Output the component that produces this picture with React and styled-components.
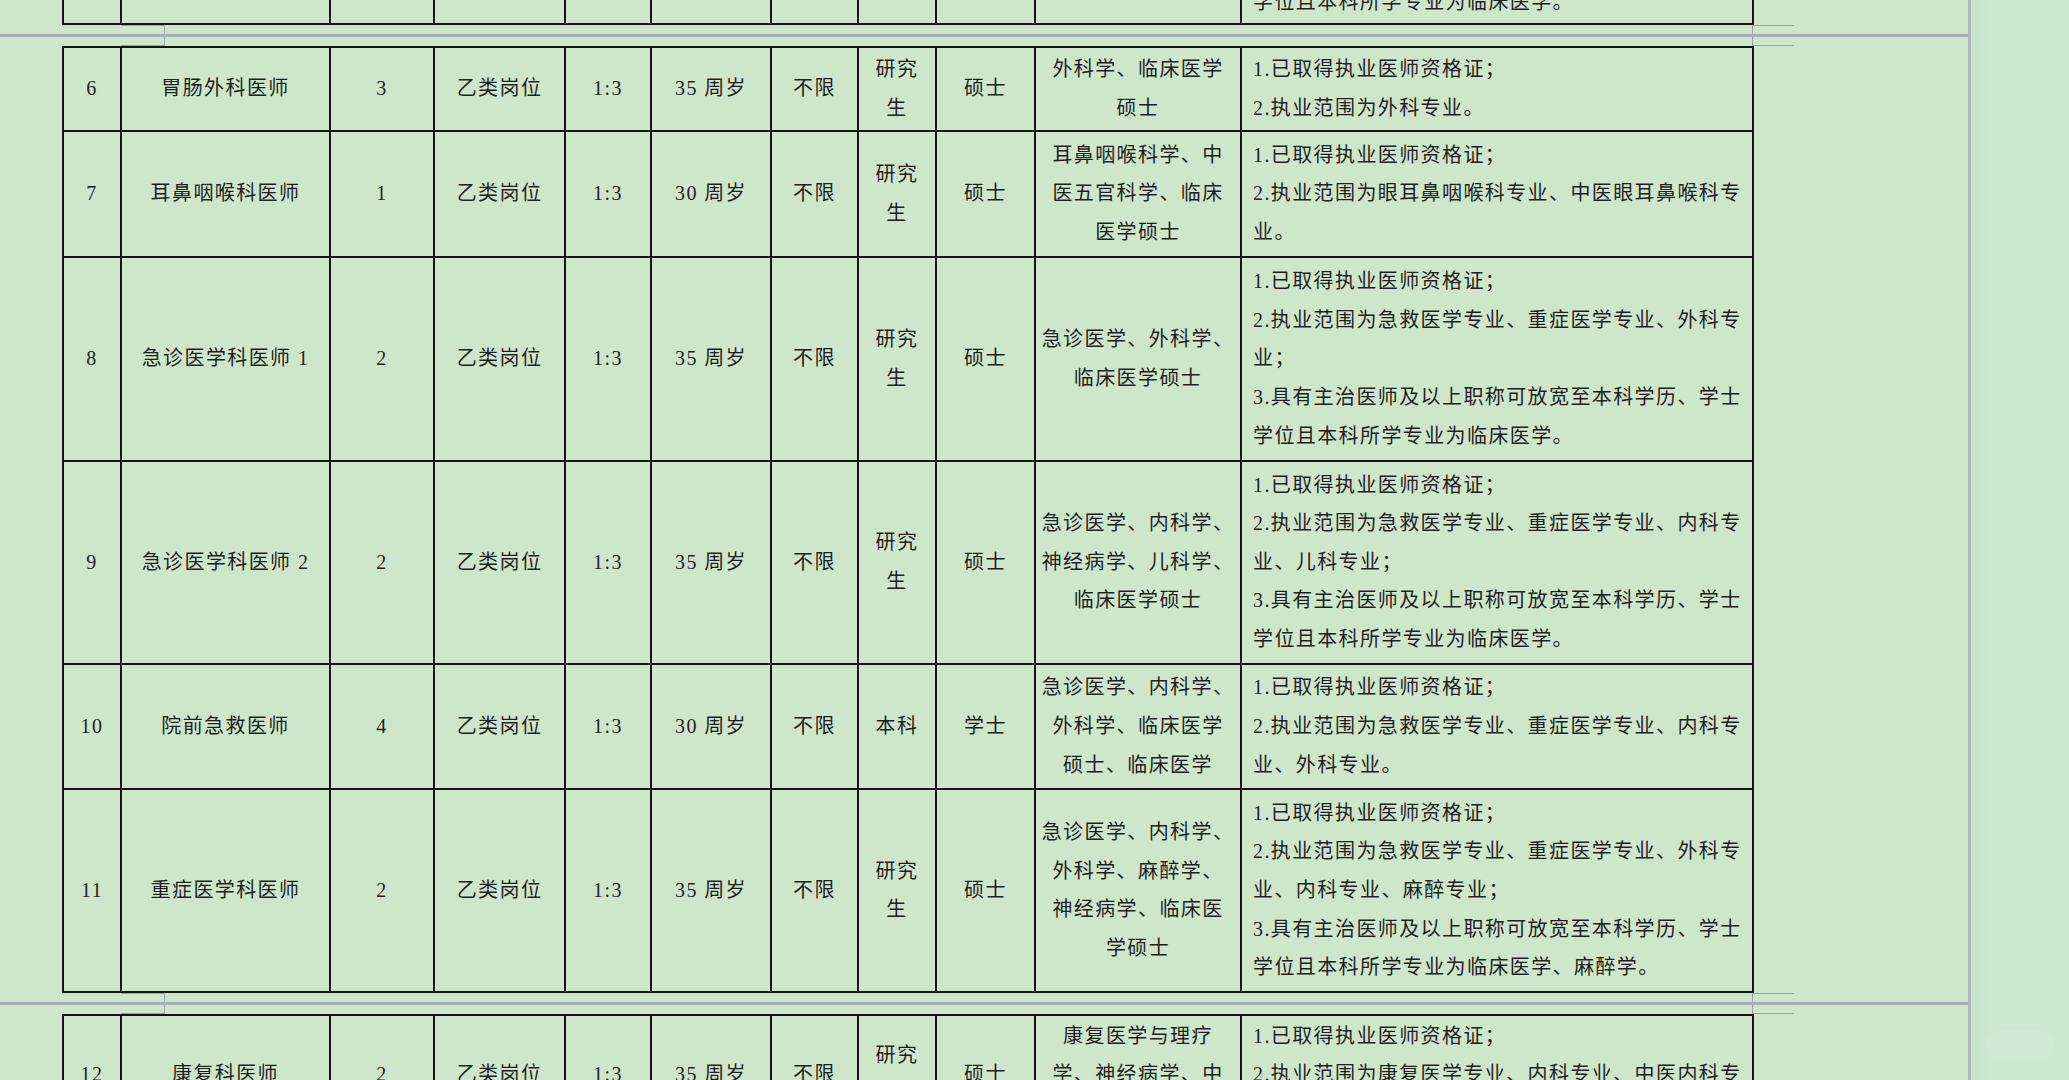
import React from "react";
import styled, { createGlobalStyle } from "styled-components";

const GlobalStyle = createGlobalStyle`
  html, body {
    margin: 0;
    padding: 0;
    background: #cee7cb;
  }
  body {
    font-family: "Liberation Serif", "Noto Sans CJK SC", serif;
    color: #1f1f1f;
  }
`;

const Screen = styled.div`
  display: flex;
  width: 2069px;
  height: 1080px;
  overflow: hidden;
  background: #cee7cb;
`;

const Doc = styled.div`
  width: 1968px;
  flex: none;
  display: flex;
  flex-direction: column;
  overflow: hidden;
`;

const Edge = styled.div`
  width: 3px;
  flex: none;
  background: #b2b6be;
`;

const Side = styled.div`
  flex: 1;
  background: linear-gradient(to right, #c7e3cc, #cde8d1 18px);
  display: flex;
  flex-direction: column;
  justify-content: flex-end;
  align-items: center;
  padding-bottom: 20px;
`;

const Watermark = styled.div`
  width: 68px;
  height: 30px;
  border-radius: 15px;
  background: rgba(255, 255, 255, 0.07);
`;

// tail of the previous page, only its bottom edge shows
const Tail = styled.div`
  height: 25px;
  flex: none;
  overflow: hidden;
  display: flex;
  flex-direction: column;
  justify-content: flex-end;
`;

const Sheet = styled.table`
  flex: none;
  margin-left: 62px;
  width: 1690px;
  table-layout: fixed;
  border-collapse: collapse;
`;

const Row = styled.tr`
  height: ${(p) => p.$h}px;
`;

const Cell = styled.td`
  border: 2px solid #151515;
  padding: 0 ${(p) => (p.$left ? "4px 0 11px" : "4px")};
  text-align: ${(p) => (p.$left ? "left" : "center")};
  vertical-align: middle;
  font-size: 20px;
  line-height: 38.6px;
  letter-spacing: 1.4px;
  white-space: nowrap;
  overflow: hidden;
`;

const Line = styled.div`
  display: block;
`;

const Break = styled.div`
  flex: none;
  display: grid;
  grid-template-columns: 121px 44px 1587px 42px 1fr;
  grid-template-rows: 9px 3px 9px;
`;

const BreakLine = styled.div`
  grid-column: 1 / -1;
  grid-row: 2;
  background: #a9adb5;
`;

const Mark = styled.div`
  grid-column: ${(p) => (p.$right ? 4 : 2)};
  grid-row: ${(p) => (p.$bottom ? 3 : 1)};
  border-color: #9ea2aa;
  border-style: solid;
  border-width: ${(p) =>
    `${p.$bottom ? 0 : 1}px ${p.$right ? 0 : 1}px ${p.$bottom ? 1 : 0}px ${
      p.$right ? 1 : 0
    }px`};
`;

const widths = [58, 209, 104, 131, 86, 120, 87, 78, 99, 206, 512];

const REQ1 = "1.已取得执业医师资格证；";
const REQ3 = "3.具有主治医师及以上职称可放宽至本科学历、学士";

const prevRow = {
  h: 197,
  blank: true,
  req: [
    REQ1,
    "2.执业范围为急救医学专业、重症医学专业、内科专",
    "业；",
    REQ3,
    "学位且本科所学专业为临床医学。",
  ],
};

const rows = [
  {
    h: 83.5,
    no: "6",
    name: "胃肠外科医师",
    num: "3",
    age: "35 周岁",
    edu: ["研究", "生"],
    degree: "硕士",
    major: ["外科学、临床医学", "硕士"],
    req: [REQ1, "2.执业范围为外科专业。"],
  },
  {
    h: 126.5,
    no: "7",
    name: "耳鼻咽喉科医师",
    num: "1",
    age: "30 周岁",
    edu: ["研究", "生"],
    degree: "硕士",
    major: ["耳鼻咽喉科学、中", "医五官科学、临床", "医学硕士"],
    req: [REQ1, "2.执业范围为眼耳鼻咽喉科专业、中医眼耳鼻喉科专", "业。"],
  },
  {
    h: 203.5,
    no: "8",
    name: "急诊医学科医师 1",
    num: "2",
    age: "35 周岁",
    edu: ["研究", "生"],
    degree: "硕士",
    major: ["急诊医学、外科学、", "临床医学硕士"],
    req: [
      REQ1,
      "2.执业范围为急救医学专业、重症医学专业、外科专",
      "业；",
      REQ3,
      "学位且本科所学专业为临床医学。",
    ],
  },
  {
    h: 203,
    no: "9",
    name: "急诊医学科医师 2",
    num: "2",
    age: "35 周岁",
    edu: ["研究", "生"],
    degree: "硕士",
    major: ["急诊医学、内科学、", "神经病学、儿科学、", "临床医学硕士"],
    req: [
      REQ1,
      "2.执业范围为急救医学专业、重症医学专业、内科专",
      "业、儿科专业；",
      REQ3,
      "学位且本科所学专业为临床医学。",
    ],
  },
  {
    h: 125.5,
    no: "10",
    name: "院前急救医师",
    num: "4",
    age: "30 周岁",
    edu: ["本科"],
    degree: "学士",
    major: ["急诊医学、内科学、", "外科学、临床医学", "硕士、临床医学"],
    req: [REQ1, "2.执业范围为急救医学专业、重症医学专业、内科专", "业、外科专业。"],
  },
  {
    h: 202.5,
    no: "11",
    name: "重症医学科医师",
    num: "2",
    age: "35 周岁",
    edu: ["研究", "生"],
    degree: "硕士",
    major: ["急诊医学、内科学、", "外科学、麻醉学、", "神经病学、临床医", "学硕士"],
    req: [
      REQ1,
      "2.执业范围为急救医学专业、重症医学专业、外科专",
      "业、内科专业、麻醉专业；",
      REQ3,
      "学位且本科所学专业为临床医学、麻醉学。",
    ],
  },
];

const nextRow = {
  h: 120,
  no: "12",
  name: "康复科医师",
  num: "2",
  age: "35 周岁",
  edu: ["研究", "生"],
  degree: "硕士",
  major: ["康复医学与理疗", "学、神经病学、中", "医康复学硕士"],
  req: [REQ1, "2.执业范围为康复医学专业、内科专业、中医内科专", "业。"],
};

function Lines({ items }) {
  return items.map((t, i) => <Line key={i}>{t}</Line>);
}

function PostRow({ r }) {
  const b = r.blank;
  return (
    <Row $h={r.h}>
      <Cell>{b ? "" : r.no}</Cell>
      <Cell>{b ? "" : r.name}</Cell>
      <Cell>{b ? "" : r.num}</Cell>
      <Cell>{b ? "" : "乙类岗位"}</Cell>
      <Cell>{b ? "" : "1:3"}</Cell>
      <Cell>{b ? "" : r.age}</Cell>
      <Cell>{b ? "" : "不限"}</Cell>
      <Cell>{b ? "" : <Lines items={r.edu} />}</Cell>
      <Cell>{b ? "" : r.degree}</Cell>
      <Cell>{b ? "" : <Lines items={r.major} />}</Cell>
      <Cell $left>
        <Lines items={r.req} />
      </Cell>
    </Row>
  );
}

function Table({ data }) {
  return (
    <Sheet>
      <colgroup>
        {widths.map((w, i) => (
          <col key={i} style={{ width: w }} />
        ))}
      </colgroup>
      <tbody>
        {data.map((r, i) => (
          <PostRow key={i} r={r} />
        ))}
      </tbody>
    </Sheet>
  );
}

function PageBreak() {
  return (
    <Break>
      <Mark />
      <Mark $right />
      <BreakLine />
      <Mark $bottom />
      <Mark $bottom $right />
    </Break>
  );
}

export default function App() {
  return (
    <>
      <GlobalStyle />
      <Screen>
        <Doc>
          <Tail>
            <Table data={[prevRow]} />
          </Tail>
          <PageBreak />
          <Table data={rows} />
          <PageBreak />
          <Table data={[nextRow]} />
        </Doc>
        <Edge />
        <Side>
          <Watermark />
        </Side>
      </Screen>
    </>
  );
}
